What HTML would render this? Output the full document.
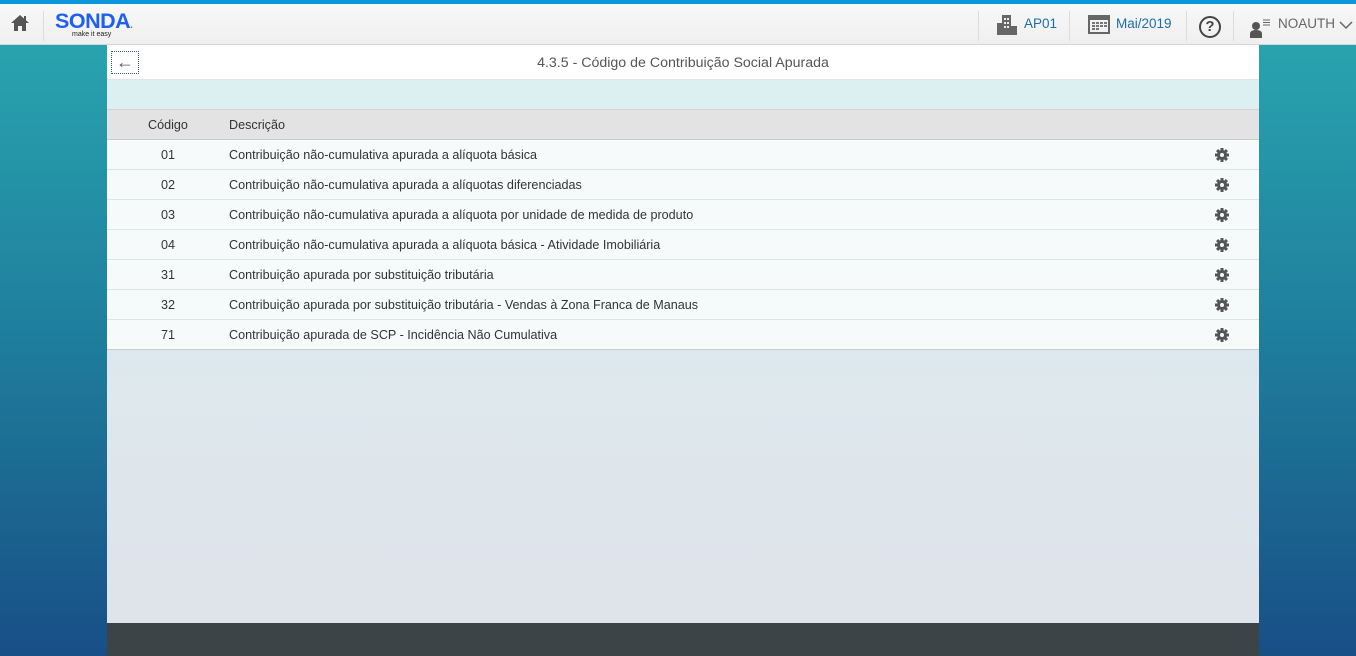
<!DOCTYPE html>
<html><head><meta charset="utf-8"><style>
*{margin:0;padding:0;box-sizing:border-box}
body{width:1356px;height:656px;overflow:hidden;font-family:"Liberation Sans",sans-serif;background:linear-gradient(#2aa9b1 0%,#1f7f9d 50%,#184f86 100%);position:relative}
.top{position:absolute;top:0;left:0;width:1356px;height:45px;background:linear-gradient(#f8f8f8,#efefef);border-top:4px solid #0a96d8;border-bottom:1px solid #d6d6d6}
.sep{position:absolute;top:7px;width:1px;height:30px;background:#dcdcdc}
.nav{position:absolute;top:12px;font-size:13.5px;color:#1b6ea8}
.panel{position:absolute;left:107px;top:45px;width:1152px;height:578px;background:linear-gradient(#dcf1f2 0%,#dde9ee 50%,#dfe3ea 100%)}
.hdr{height:35px;background:#fff;border-bottom:1px solid #e3e3e3;text-align:center;font-size:14.2px;color:#555;line-height:36px;position:relative}
.back{position:absolute;left:4px;top:6px;width:28px;height:23px;border:1px dotted #2a5d88;line-height:20px;font-size:18px;font-weight:bold;color:#555}
table{position:absolute;top:64px;left:0;width:1152px;border-collapse:collapse;font-size:12.6px;color:#333}
th{background:#e3e3e3;height:30px;font-weight:normal;text-align:left;border-top:1px solid #d3d3d3;border-bottom:1px solid #ccc}
td{background:#f6fafb;height:30px;border-bottom:1px solid #dde4e6}
tr:last-child td{border-bottom:1px solid #c8cccf}
.c{text-align:center;width:122px}
.footer{position:absolute;left:107px;top:623px;width:1152px;height:33px;background:#3d4447}
</style></head><body>
<div class="top">
 <svg style="position:absolute;left:10px;top:9px" width="20" height="20" viewBox="0 0 20 20"><path d="M10 2L1 10h3v8h4v-5h4v5h4v-8h3z" fill="#555"/><rect x="14" y="3" width="2" height="5" fill="#555"/></svg>
 <div class="sep" style="left:43px"></div>
 <div style="position:absolute;left:55px;top:5px;font-size:21.5px;font-weight:bold;color:#1f5ff0;letter-spacing:-0.5px">SONDA<span style="font-size:10px;color:#777">.</span></div>
 <div style="position:absolute;left:72px;top:27px;font-size:7px;color:#222">make it easy</div>
 <div class="sep" style="left:978px"></div>
 <svg style="position:absolute;left:996px;top:10px" width="22" height="22" viewBox="0 0 22 22"><rect x="6" y="1" width="9" height="20" fill="#666"/><rect x="1" y="9" width="6" height="12" fill="#666"/><rect x="15" y="12" width="6" height="9" fill="#666"/><g fill="#eee"><rect x="8" y="4" width="2" height="2"/><rect x="11" y="4" width="2" height="2"/><rect x="8" y="8" width="2" height="2"/><rect x="11" y="8" width="2" height="2"/><rect x="8" y="12" width="2" height="2"/><rect x="11" y="12" width="2" height="2"/></g></svg>
 <div class="nav" style="left:1024px">AP01</div>
 <div class="sep" style="left:1069px"></div>
 <svg style="position:absolute;left:1088px;top:10px" width="22" height="20" viewBox="0 0 22 20"><rect x="1" y="2" width="20" height="17" fill="none" stroke="#666" stroke-width="2"/><rect x="1" y="2" width="20" height="4" fill="#666"/><g fill="#777"><rect x="4" y="8" width="3" height="2"/><rect x="8" y="8" width="3" height="2"/><rect x="12" y="8" width="3" height="2"/><rect x="16" y="8" width="3" height="2"/><rect x="4" y="11" width="3" height="2"/><rect x="8" y="11" width="3" height="2"/><rect x="12" y="11" width="3" height="2"/><rect x="16" y="11" width="3" height="2"/><rect x="4" y="14" width="3" height="2"/><rect x="8" y="14" width="3" height="2"/></g></svg>
 <div class="nav" style="left:1116px">Mai/2019</div>
 <div class="sep" style="left:1186px"></div>
 <div style="position:absolute;left:1199px;top:12px;width:22px;height:22px;border:2px solid #444;border-radius:50%;text-align:center;font-size:15px;font-weight:bold;line-height:18px;color:#444">?</div>
 <div class="sep" style="left:1233px"></div>
 <svg style="position:absolute;left:1249px;top:11px" width="24" height="24" viewBox="0 0 24 24"><circle cx="7" cy="11" r="4" fill="#555"/><path d="M1 23v-4q0-4 6-4 6 0 6 4v4z" fill="#555"/><g stroke="#666"><line x1="14" y1="5" x2="21" y2="5"/><line x1="14" y1="7.5" x2="21" y2="7.5"/><line x1="14" y1="10" x2="21" y2="10"/></g></svg>
 <div class="nav" style="left:1278px;color:#666">NOAUTH</div>
 <svg style="position:absolute;left:1339px;top:16px" width="14" height="10"><path d="M1 2l6 6 6-6" stroke="#666" stroke-width="1.5" fill="none"/></svg>
</div>
<div class="panel">
 <div class="hdr"><div class="back">&#8592;</div>4.3.5 - Código de Contribuição Social Apurada</div>
 <table>
 <tr><th class="c">Código</th><th>Descrição</th><th></th></tr>
 <tr><td class="c">01</td><td>Contribuição não-cumulativa apurada a alíquota básica</td><td class="g"></td></tr>
 <tr><td class="c">02</td><td>Contribuição não-cumulativa apurada a alíquotas diferenciadas</td><td class="g"></td></tr>
 <tr><td class="c">03</td><td>Contribuição não-cumulativa apurada a alíquota por unidade de medida de produto</td><td class="g"></td></tr>
 <tr><td class="c">04</td><td>Contribuição não-cumulativa apurada a alíquota básica - Atividade Imobiliária</td><td class="g"></td></tr>
 <tr><td class="c">31</td><td>Contribuição apurada por substituição tributária</td><td class="g"></td></tr>
 <tr><td class="c">32</td><td>Contribuição apurada por substituição tributária - Vendas à Zona Franca de Manaus</td><td class="g"></td></tr>
 <tr><td class="c">71</td><td>Contribuição apurada de SCP - Incidência Não Cumulativa</td><td class="g"></td></tr>
 </table>
</div>
<div class="footer"></div>
<script>
document.querySelectorAll('td.g').forEach(function(t){t.style.width='80px';t.innerHTML='<svg width="16" height="16" viewBox="0 0 16 16" style="display:block;margin-left:35px"><g fill="#555"><circle cx="8" cy="8" r="5"/><rect x="6.5" y="1" width="3" height="14"/><rect x="1" y="6.5" width="14" height="3"/><rect x="6.5" y="1" width="3" height="14" transform="rotate(45 8 8)"/><rect x="6.5" y="1" width="3" height="14" transform="rotate(-45 8 8)"/></g><circle cx="8" cy="8" r="2" fill="#f6fafb"/></svg>';});
</script>
</body></html>
